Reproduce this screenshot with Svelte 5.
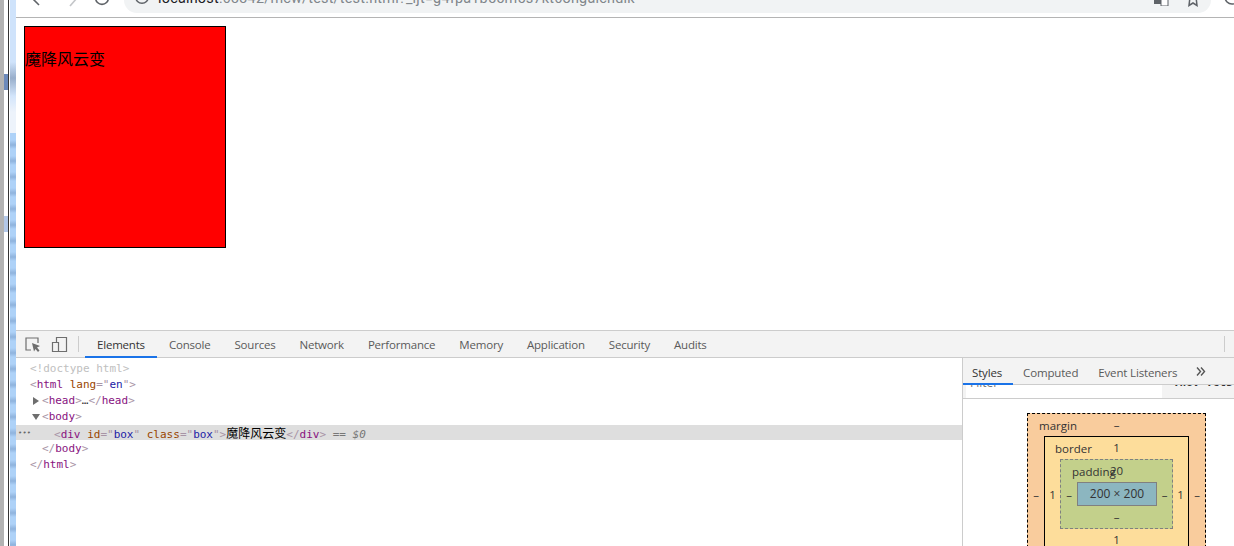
<script>
	const mainTabs = ['Elements', 'Console', 'Sources', 'Network', 'Performance', 'Memory', 'Application', 'Security', 'Audits'];
	const sideTabs = ['Styles', 'Computed', 'Event Listeners'];
</script>

<div class="shot">
	<div class="strip">
		<div class="strip-gray"></div>
		<div class="strip-track">
			<div class="marker dark"></div>
			<div class="marker light"></div>
		</div>
		<div class="strip-line"></div>
		<div class="strip-blue"></div>
	</div>

	<div class="window">
		<header class="chrome">
			<svg class="nav back" width="12" height="8" viewBox="0 0 12 8"><path d="M1 -2 L8 5" /></svg>
			<svg class="nav forward" width="12" height="8" viewBox="0 0 12 8"><path d="M2 6 L9 -2" /></svg>
			<svg class="nav reload" width="16" height="8" viewBox="0 0 16 8"><circle cx="8" cy="-2" r="6.4" /></svg>
			<div class="omnibox">
				<svg class="info" width="16" height="8" viewBox="0 0 16 8"><circle cx="8" cy="-3" r="6.3" /></svg>
				<span class="url"><b>localhost</b>:63342/mcw/test/test.html?_ijt=g4fpa1b55m5s7kt6ongalcndik</span>
				<svg class="translate" width="15" height="6" viewBox="0 0 15 6"><path d="M0 -3H9V4H4L0 4Z" fill="#5f6368" /><path d="M7 -1H14V6H7Z" fill="#fff" stroke="#5f6368" /></svg>
				<svg class="star" width="12" height="7" viewBox="0 0 12 7"><path d="M3 -3 L2 5.5 L6 3 L10 5.5 L9 -3" fill="none" stroke="#5f6368" stroke-width="1.5" /></svg>
			</div>
			<svg class="nav profile" width="11" height="8" viewBox="0 0 11 8"><circle cx="9" cy="-3" r="7" /></svg>
		</header>

		<main class="page">
			<div class="box">魔降风云变</div>
		</main>

		<section class="devtools">
			<nav class="toolbar">
				<svg class="tool" width="17" height="17" viewBox="0 0 17 17">
					<path d="M7 14H2V2H14V7" fill="none" stroke="#6e6e6e" stroke-width="1.2" />
					<path d="M8 7L16 10L13 11.5L15.5 14.5L14 16L11.5 13L10 15.5Z" fill="#6e6e6e" />
				</svg>
				<svg class="tool device" width="17" height="17" viewBox="0 0 17 17">
					<path d="M5.5 6V1.5H15.5V15.5H6" fill="none" stroke="#6e6e6e" stroke-width="1.2" />
					<path d="M1.5 6.5H7.5V15.5H1.5Z" fill="none" stroke="#6e6e6e" stroke-width="1.2" />
				</svg>
				<span class="sep"></span>
				<div class="tabs">
					{#each mainTabs as tab, i}
						<span class="tab" class:active={i === 0}>{tab}</span>
					{/each}
				</div>
				<span class="sep end"></span>
			</nav>

			<div class="panes">
				<div class="dom">
					<div class="row"><span class="doctype">&lt;!doctype html&gt;</span></div>
					<div class="row"><span class="p">&lt;</span><span class="t">html</span> <span class="a">lang</span><span class="p">="</span><span class="v">en</span><span class="p">"&gt;</span></div>
					<div class="row in1"><i class="tri right"></i><span class="p">&lt;</span><span class="t">head</span><span class="p">&gt;</span>…<span class="p">&lt;/</span><span class="t">head</span><span class="p">&gt;</span></div>
					<div class="row in1"><i class="tri down"></i><span class="p">&lt;</span><span class="t">body</span><span class="p">&gt;</span></div>
					<div class="row in2 selected"><span class="dots">•••</span><span class="p">&lt;</span><span class="t">div</span> <span class="a">id</span><span class="p">="</span><span class="v">box</span><span class="p">"</span> <span class="a">class</span><span class="p">="</span><span class="v">box</span><span class="p">"&gt;</span><span class="cjk">魔降风云变</span><span class="p">&lt;/</span><span class="t">div</span><span class="p">&gt;</span> <em>== $0</em></div>
					<div class="row in1"><span class="p">&lt;/</span><span class="t">body</span><span class="p">&gt;</span></div>
					<div class="row"><span class="p">&lt;/</span><span class="t">html</span><span class="p">&gt;</span></div>
				</div>

				<aside class="side">
					<div class="side-tabs">
						{#each sideTabs as tab, i}
							<span class="stab" class:active={i === 0}>{tab}</span>
						{/each}
						<svg class="more" width="10" height="9" viewBox="0 0 10 9"><path d="M1 0.5L4.5 4.5L1 8.5M5 0.5L8.5 4.5L5 8.5" fill="none" stroke="#555" stroke-width="1.4" /></svg>
					</div>
					<div class="filter">
						<div class="filter-input"><span>Filter</span></div>
						<span class="hov">:hov .cls</span>
					</div>
					<div class="metrics">
						<div class="bm margin">
							<span class="label">margin</span>
							<div class="val top">–</div>
							<div class="mid">
								<span class="val side-val">–</span>
								<div class="bm border">
									<span class="label">border</span>
									<div class="val top">1</div>
									<div class="mid">
										<span class="val border-val">1</span>
										<div class="bm padding">
											<span class="label">padding</span>
											<div class="val top">20</div>
											<div class="mid">
												<span class="val side-val">–</span>
												<div class="content">200 × 200</div>
												<span class="val pad-right">–</span>
											</div>
											<div class="val top">–</div>
										</div>
										<span class="val border-val">1</span>
									</div>
									<div class="val top">1</div>
								</div>
								<span class="val side-val">–</span>
							</div>
						</div>
					</div>
				</aside>
			</div>
		</section>
	</div>
</div>

<style>
	:global(body) {
		margin: 0;
		background: #fff;
	}

	.shot {
		display: flex;
		width: 1234px;
		height: 546px;
		overflow: hidden;
		font-family: 'Open Sans', 'Noto Sans CJK SC', sans-serif;
	}

	/* sliver of the window behind, on the left edge */
	.strip {
		display: flex;
		flex: 0 0 16px;
	}

	.strip-gray {
		width: 4px;
		background: #b3b3b3;
	}

	.strip-track {
		width: 4px;
		padding-top: 74px;
		box-sizing: border-box;
		background: #fff;
	}

	.marker {
		height: 16px;
	}

	.marker.dark {
		background: #6d8abb;
	}

	.marker.light {
		margin-top: 126px;
		background: #b3c8e8;
	}

	.strip-line {
		width: 2px;
		box-sizing: border-box;
		border-left: 1px solid #333;
		background: #fff;
	}

	.strip-blue {
		width: 6px;
		background:
			repeating-linear-gradient(180deg, #aed2f8 0, #aed2f8 7px, #8fb3dd 12px, #aed2f8 16px) 0 133px no-repeat,
			linear-gradient(180deg, #cfe3fb 0, #cfe3fb 62px, #98aecb 78px, #d3e5fb 96px, #edf3fb 112px, #edf3fb 133px);
	}

	.window {
		display: flex;
		flex: 1;
		flex-direction: column;
		min-width: 0;
	}

	.chrome {
		display: flex;
		flex: 0 0 18px;
		align-items: flex-start;
		box-sizing: border-box;
		overflow: hidden;
		border-bottom: 1px solid #b4b4b4;
		background: #fff;
	}

	.nav {
		fill: none;
		stroke: #5f6368;
		stroke-width: 1.6;
		flex: none;
	}

	.back {
		margin-left: 15px;
	}

	.forward {
		margin-left: 25px;
		stroke: #c4c6c9;
	}

	.reload {
		margin-left: 14px;
	}

	.omnibox {
		display: flex;
		flex: 0 0 1087px;
		align-items: flex-start;
		box-sizing: border-box;
		height: 13px;
		margin-left: 14px;
		padding-left: 10px;
		overflow: hidden;
		border-radius: 0 0 14px 14px;
		background: #f1f3f4;
	}

	.info {
		flex: none;
		fill: none;
		stroke: #5f6368;
		stroke-width: 1.5;
	}

	.url {
		margin: -10px 0 0 8px;
		font-family: 'Roboto', sans-serif;
		font-size: 14.4px;
		line-height: 18px;
		letter-spacing: 0.23px;
		white-space: nowrap;
		color: #80868b;
	}

	.url b {
		font-weight: 400;
		color: #202124;
	}

	.translate {
		flex: none;
		margin-left: 519px;
	}

	.star {
		flex: none;
		margin-left: 18px;
	}

	.profile {
		margin-left: 12px;
	}

	.page {
		flex: 0 0 312px;
		box-sizing: border-box;
		padding: 8px;
	}

	.box {
		box-sizing: content-box;
		width: 200px;
		height: 200px;
		padding-top: 20px;
		border: 1px solid #000;
		background: #f00;
		font-family: 'Noto Sans CJK SC', sans-serif;
		font-size: 16px;
		line-height: 22px;
		color: #000;
	}

	.devtools {
		display: flex;
		flex: 1;
		flex-direction: column;
		min-height: 0;
	}

	.toolbar {
		display: flex;
		flex: 0 0 28px;
		align-items: center;
		box-sizing: border-box;
		border-top: 1px solid #ccc;
		border-bottom: 1px solid #ccc;
		background: #f3f3f3;
		padding-left: 8px;
	}

	.tool.device {
		margin-left: 10px;
	}

	.sep {
		flex: none;
		width: 1px;
		height: 16px;
		margin-left: 10px;
		background: #ccc;
	}

	.sep.end {
		margin-left: auto;
		margin-right: 9px;
	}

	.tabs {
		display: flex;
		align-self: stretch;
		margin-left: 6px;
		margin-bottom: -1px;
	}

	.tab {
		display: flex;
		align-items: center;
		box-sizing: border-box;
		padding: 0 12px;
		font-size: 11.5px;
		letter-spacing: -0.2px;
		color: #5a5a5a;
	}

	.tab.active {
		color: #333;
		border-bottom: 2px solid #1a73e8;
		padding-top: 2px;
	}

	.panes {
		display: flex;
		flex: 1;
		min-height: 0;
	}

	.dom {
		flex: 0 0 946px;
		box-sizing: border-box;
		padding-top: 3px;
		font-family: 'DejaVu Sans Mono', monospace;
		font-size: 11px;
		line-height: 16px;
		color: #333;
	}

	.row {
		position: relative;
		height: 16px;
		padding-left: 14px;
		white-space: pre;
	}

	.row.in1 {
		padding-left: 26px;
	}

	.row.in2 {
		padding-left: 38px;
	}

	.selected {
		height: 15px;
		margin-bottom: 1px;
		background: #dedede;
	}

	.doctype {
		color: #c0c0c0;
	}

	.p {
		color: #a894a6;
	}

	.t {
		color: #881280;
	}

	.a {
		color: #994500;
	}

	.v {
		color: #1a1aa6;
	}

	.cjk {
		font-family: 'Noto Sans CJK SC', sans-serif;
		font-size: 12px;
		line-height: 15px;
		color: #000;
	}

	.row em {
		color: #777;
	}

	.dots {
		position: absolute;
		left: 2px;
		top: 0;
		font-size: 7px;
		letter-spacing: 0.2px;
		color: #666;
	}

	.tri {
		position: absolute;
		left: 17px;
		top: 4px;
		width: 0;
		height: 0;
	}

	.tri.right {
		border-top: 4px solid transparent;
		border-bottom: 4px solid transparent;
		border-left: 6px solid #6e6e6e;
	}

	.tri.down {
		left: 16px;
		top: 5px;
		border-left: 4px solid transparent;
		border-right: 4px solid transparent;
		border-top: 6px solid #6e6e6e;
	}

	.side {
		display: flex;
		flex: 1;
		flex-direction: column;
		min-width: 0;
		border-left: 1px solid #ccc;
		overflow: hidden;
	}

	.side-tabs {
		display: flex;
		flex: 0 0 27px;
		align-items: center;
		box-sizing: border-box;
		border-bottom: 1px solid #ccc;
		background: #f3f3f3;
	}

	.stab {
		display: flex;
		align-items: center;
		align-self: stretch;
		box-sizing: border-box;
		margin-bottom: -1px;
		padding: 1px 10px 0;
		font-size: 11.5px;
		letter-spacing: -0.16px;
		color: #5a5a5a;
	}

	.stab.active {
		padding-left: 9px;
		padding-right: 11px;
		padding-top: 3px;
		color: #333;
		border-bottom: 2px solid #1a73e8;
	}

	.more {
		margin-left: 9px;
	}

	.filter {
		display: flex;
		flex: 0 0 14px;
		box-sizing: border-box;
		overflow: hidden;
		border-bottom: 1px solid #ccc;
		background: #f3f3f3;
		padding-left: 3px;
	}

	.filter-input {
		width: 196px;
		overflow: hidden;
		background: #fff;
	}

	.filter-input span,
	.hov {
		display: block;
		margin-top: -10px;
		padding-left: 4px;
		font-size: 12px;
		line-height: 16px;
		color: #757575;
	}

	.hov {
		margin-left: 7px;
		white-space: nowrap;
		color: #333;
		font-family: 'DejaVu Sans Mono', monospace;
		font-size: 11px;
		font-weight: 700;
	}

	.metrics {
		flex: 1;
		padding: 14px 0 0 64px;
		background: #fff;
	}

	.bm {
		position: relative;
		font-size: 11.5px;
		line-height: 21px;
		color: #333;
	}

	.margin {
		box-sizing: border-box;
		width: 179px;
		border: 1px dashed #000;
		background: #f9cc9d;
	}

	.border {
		flex: 1;
		border: 1px solid #000;
		background: #fddd9b;
	}

	.padding {
		flex: 1;
		border: 1px dashed #808080;
		background: #c3d08b;
	}

	.label {
		position: absolute;
		left: 11px;
		top: 1px;
		line-height: 21px;
	}

	.border > .label {
		left: 10px;
	}

	.val {
		text-align: center;
	}

	.val.top {
		height: 22px;
	}

	.mid {
		display: flex;
		align-items: center;
	}

	.side-val {
		flex: 0 0 16px;
	}

	.border-val {
		flex: 0 0 15px;
	}

	.pad-right {
		flex: 0 0 15px;
	}

	.content {
		flex: 1;
		box-sizing: border-box;
		height: 24px;
		border: 1px solid #808080;
		background: #8cb6c0;
		font-size: 12px;
		line-height: 22px;
		text-align: center;
	}
</style>
